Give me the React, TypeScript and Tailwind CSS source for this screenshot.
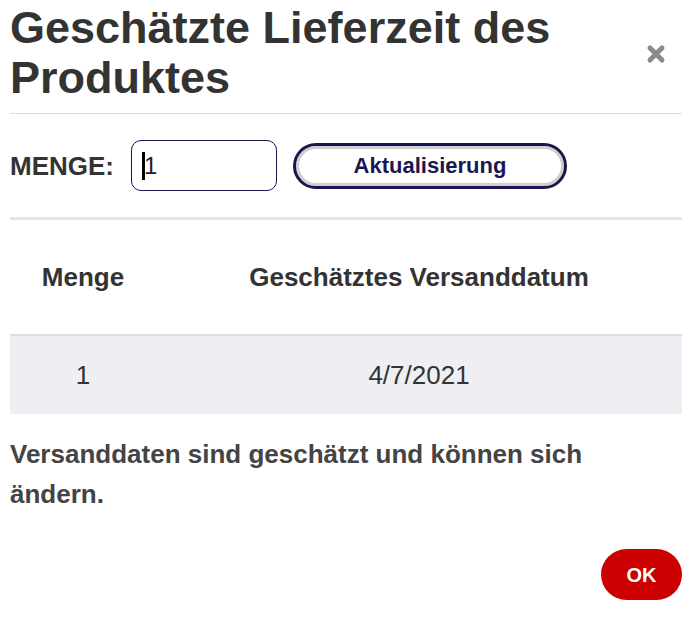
import React from "react";

export default function App() {
  return (
    <div className="w-[692px] h-[618px] bg-white px-[10px] font-['Liberation_Sans',Arial,sans-serif] text-[#333]">
      <div className="flex items-center justify-between border-b border-[#d9d9d9] pt-[3px] pb-[10px]">
        <h1 className="text-[45px] leading-[50px] font-bold text-[#333] w-[580px]">
          Geschätzte Lieferzeit des Produktes
        </h1>
        <div className="mr-[16px] mt-[2px]">
          <svg width="20" height="20" viewBox="0 0 20 20">
            <path d="M4 4 L16 16 M16 4 L4 16" stroke="#8a8a8a" strokeWidth="5" strokeLinecap="round" />
          </svg>
        </div>
      </div>

      <div className="flex items-center pt-[26px] pb-[26px] border-b-[3px] border-[#e6e6e6]">
        <span className="text-[26px] font-bold text-[#333] leading-none">MENGE:</span>
        <div className="relative ml-[17px] w-[146px] h-[51px] rounded-[10px] border border-[#1b1650] flex items-center pl-[10px]">
          <span className="w-[3px] h-[28px] bg-black" />
          <span className="text-[24px] text-[#222] -ml-[1px]">1</span>
        </div>
        <button className="ml-[16px] w-[274px] h-[46px] rounded-full border-[3px] border-[#1b1650] bg-white shadow-[inset_0_0_0_3px_#cfcfcf] text-[22px] font-bold text-[#1b1650] flex items-center justify-center">
          Aktualisierung
        </button>
      </div>

      <table className="w-full border-collapse">
        <thead>
          <tr className="h-[115px]">
            <th className="w-[146px] text-center text-[26px] font-bold text-[#333]">Menge</th>
            <th className="text-center text-[26px] font-bold text-[#333]">Geschätztes Versanddatum</th>
          </tr>
        </thead>
        <tbody>
          <tr className="h-[79px] bg-[#efeff3] border-t-[2px] border-[#dcdcdc]">
            <td className="text-center text-[26px] text-[#333]">1</td>
            <td className="text-center text-[26px] text-[#333]">4/7/2021</td>
          </tr>
        </tbody>
      </table>

      <p className="mt-[20px] text-[26px] leading-[40px] font-bold text-[#444]">
        Versanddaten sind geschätzt und können sich ändern.
      </p>

      <div className="flex justify-end mt-[35px]">
        <button className="w-[81px] h-[51px] rounded-full bg-[#cc0000] text-white text-[20px] font-bold">
          OK
        </button>
      </div>
    </div>
  );
}
